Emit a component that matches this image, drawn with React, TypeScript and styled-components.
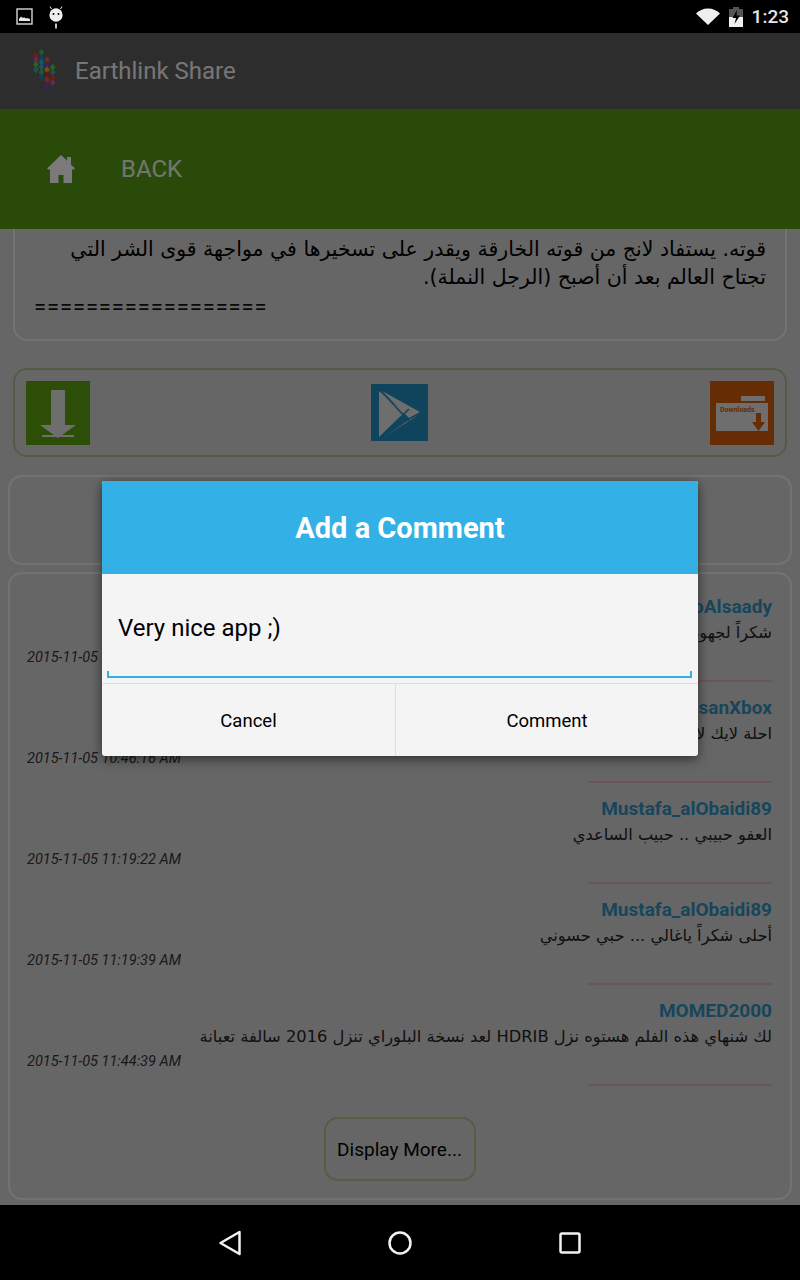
import React from "react";
import styled, { createGlobalStyle } from "styled-components";

const Global = createGlobalStyle`
  html, body { margin: 0; padding: 0; height: 100%; background: #000; }
  #root { height: 100%; }
  * { box-sizing: border-box; }
`;

const FONT = `Roboto, "DejaVu Sans", sans-serif`;

const Page = styled.div`
  width: 800px;
  height: 1280px;
  display: flex;
  flex-direction: column;
  overflow: hidden;
  font-family: ${FONT};
`;

const StatusBar = styled.div`
  height: 33px;
  flex: none;
  background: #000;
  display: flex;
  align-items: center;
  padding: 0 11px 0 16px;
  gap: 9px;
`;

const StatusSpacer = styled.div`
  flex: 1;
`;

const Clock = styled.span`
  font-size: 19px;
  font-weight: 500;
  color: #e6e6e6;
`;

const Main = styled.div`
  flex: 1;
  min-height: 0;
  position: relative;
  display: flex;
  flex-direction: column;
  background: #cdcdcd;
`;

const AppBar = styled.div`
  height: 76px;
  flex: none;
  background: #5a5a5a;
  display: flex;
  align-items: center;
  padding-left: 27px;
  gap: 14px;
`;

const AppTitle = styled.span`
  font-size: 24px;
  color: #ededed;
`;

const GreenBar = styled.div`
  height: 120px;
  flex: none;
  background: #549414;
  display: flex;
  align-items: center;
  padding-left: 46px;
  gap: 45px;
  position: relative;
  z-index: 1;
`;

const BackLabel = styled.span`
  font-size: 24px;
  color: #fff;
  opacity: 0.85;
`;

const Content = styled.div`
  flex: 1;
  min-height: 0;
  overflow: hidden;
  display: flex;
  flex-direction: column;
  justify-content: flex-end;
  padding-bottom: 5px;
`;

const Card = styled.section<{ $inset: number; $top: number; $border?: string }>`
  flex: none;
  margin: ${(p) => p.$top}px ${(p) => p.$inset}px 0;
  border: 2px solid ${(p) => p.$border ?? "#e6e6e6"};
  border-radius: 14px;
`;

const StoryCard = styled(Card)`
  padding: 0 19px 20px 19px;
`;

const StoryText = styled.p`
  margin: 0;
  direction: rtl;
  font-family: "DejaVu Sans", sans-serif;
  font-size: 20.5px;
  line-height: 28px;
  color: #000;
`;

const Rule = styled.div`
  font-family: Roboto, sans-serif;
  font-size: 22px;
  line-height: 24px;
  margin-top: 4px;
  color: #111;
  letter-spacing: 0.9px;
`;

const ActionsCard = styled(Card)`
  height: 89px;
  display: flex;
  align-items: center;
  justify-content: space-between;
  padding: 0 11px;
`;

const PlayIcon = styled.svg`
  margin-right: 2px;
`;

const OrangeFolderLabel = styled.text`
  font-family: Roboto, sans-serif;
  font-size: 7px;
  font-weight: 700;
  fill: #cc5a08;
`;

const EmptyCard = styled(Card)`
  height: 90px;
`;

const CommentsCard = styled(Card)`
  height: 628px;
  padding: 21px 18px 0 17px;
  display: flex;
  flex-direction: column;
  align-items: stretch;
`;

const Comment = styled.article`
  height: 101px;
  flex: none;
  display: flex;
  flex-direction: column;
`;

const Name = styled.div`
  text-align: right;
  font-size: 19px;
  line-height: 24px;
  font-weight: 700;
  color: #2f8cb8;
`;

const Body = styled.div`
  direction: rtl;
  font-family: "DejaVu Sans", sans-serif;
  font-size: 16.3px;
  line-height: 26px;
  margin-top: 1px;
  color: #222;
  white-space: nowrap;
`;

const Stamp = styled.div`
  font-size: 14.5px;
  line-height: 20px;
  margin-top: 2px;
  font-style: italic;
  color: #333;
`;

const Divider = styled.div`
  width: 184px;
  height: 2px;
  margin: 12px 0 0 auto;
  background: #dca9b0;
`;

const MoreRow = styled.div`
  display: flex;
  justify-content: center;
  margin-top: 17px;
`;

const MoreButton = styled.button`
  width: 152px;
  height: 64px;
  border: 2px solid #b4b884;
  border-radius: 14px;
  background: transparent;
  font-family: ${FONT};
  font-size: 19px;
  color: #000;
  padding: 0;
`;

const Scrim = styled.div`
  position: absolute;
  inset: 0;
  z-index: 2;
  background: rgba(0, 0, 0, 0.5);
  display: flex;
  align-items: center;
  justify-content: center;
  padding-bottom: 2px;
`;

const Dialog = styled.div`
  width: 596px;
  height: 275px;
  border-radius: 3px;
  overflow: hidden;
  background: #f4f4f4;
  box-shadow: 0 3px 12px rgba(0, 0, 0, 0.55);
  display: flex;
  flex-direction: column;
`;

const DialogTitle = styled.h2`
  margin: 0;
  height: 93px;
  flex: none;
  padding-top: 2px;
  background: #33b1e6;
  color: #fff;
  font-size: 29px;
  font-weight: 700;
  display: flex;
  align-items: center;
  justify-content: center;
`;

const Field = styled.div`
  height: 109px;
  flex: none;
  padding: 35px 6px 0 5px;
`;

const FieldValue = styled.div`
  height: 69px;
  padding: 3px 0 0 11px;
  font-size: 24px;
  line-height: 32px;
  color: #000;
  border-bottom: 2px solid #33b1e6;
  position: relative;
  &::before,
  &::after {
    content: "";
    position: absolute;
    bottom: 0;
    width: 2px;
    height: 5px;
    background: #33b1e6;
  }
  &::before { left: 0; }
  &::after { right: 0; }
`;

const DialogActions = styled.div`
  flex: 1;
  display: grid;
  grid-template-columns: 293px 1fr;
  border-top: 1px solid #dedede;
`;

const DialogButton = styled.button`
  border: 0;
  background: transparent;
  font-family: ${FONT};
  font-size: 18.5px;
  color: #000;
  padding: 2px 0 0;
  & + & { border-left: 1px solid #dedede; }
`;

const NavBar = styled.div`
  height: 75px;
  flex: none;
  background: #000;
  display: grid;
  grid-template-columns: repeat(3, 170px);
  justify-content: center;
  align-items: center;
  justify-items: center;
`;

const logoColors = ["#2fa8a0", "#d0602a", "#3aa0d8", "#c8402a", "#7a40c8", "#40b060", "#d84a90", "#e8a020", "#3070d0", "#60c040", "#c83030", "#30b0b0"];

const Logo = () => {
  const cells: React.ReactNode[] = [];
  for (let r = 0; r < 7; r++) {
    for (let c = 0; c < 4; c++) {
      if ((r === 0 && c !== 1) || (r === 6 && c !== 2) || (r === 1 && c === 3) || (r === 5 && c === 0)) continue;
      const x = 6 + c * 5.6;
      const y = 1.5 + r * 5 + c * 2.5;
      cells.push(
        <path
          key={`${r}-${c}`}
          d={`M${x} ${y}l2.9-3.2 2.9 3.200-2.900 4.200z`}
          fill={logoColors[(r * 3 + c * 5) % logoColors.length]}
        />
      );
    }
  }
  return (
    <svg width="34" height="46" viewBox="0 0 34 46" aria-hidden>
      {cells}
    </svg>
  );
};

const comments = [
  { name: "AboAlsaady", text: "شكراً لجهودكم الرائعة والمميزة دائماً يا طيبين", time: "2015-11-05 10:40:02 AM" },
  { name: "HasanXbox", text: "احلة لايك لاحلى تطبيق من الايرثلنك", time: "2015-11-05 10:46:16 AM" },
  { name: "Mustafa_alObaidi89", text: "العفو حبيبي .. حبيب الساعدي", time: "2015-11-05 11:19:22 AM" },
  { name: "Mustafa_alObaidi89", text: "أحلى شكراً ياغالي ... حبي حسوني", time: "2015-11-05 11:19:39 AM" },
  { name: "MOMED2000", text: "لك شنهاي هذه الفلم هستوه نزل HDRIB لعد نسخة البلوراي تنزل 2016 سالفة تعبانة", time: "2015-11-05 11:44:39 AM" },
];

export default function App() {
  return (
    <Page>
      <Global />
      <StatusBar>
        <svg width="17" height="17" viewBox="0 0 17 17" aria-hidden>
          <rect x="1" y="1" width="15" height="15" fill="none" stroke="#d8d8d8" strokeWidth="1.4" />
          <path d="M3 13v-2l2-2.5 2 1.5 1-.8 2 1.2 1-.4 3 1V13z" fill="#e8e8e8" />
        </svg>
        <svg width="30" height="26" viewBox="0 0 30 26" aria-hidden>
          <ellipse cx="14" cy="11" rx="6.6" ry="6.8" fill="#efefef" />
          <path d="M9.5 5 8 2.5M18.5 5 20 2.5" stroke="#efefef" strokeWidth="1" />
          <circle cx="11.5" cy="10" r="1" fill="#000" />
          <circle cx="16.5" cy="10" r="1" fill="#000" />
          <rect x="13.2" y="19.5" width="1.6" height="5" fill="#efefef" />
        </svg>
        <StatusSpacer />
        <svg width="24" height="17" viewBox="0 0 24 17" aria-hidden>
          <path d="M0 5.5C3 2.5 7 .5 12 .5s9 2 12 5L12 17z" fill="#efefef" />
        </svg>
        <svg width="14" height="20" viewBox="0 0 14 20" aria-hidden>
          <path d="M4 0h6v2h4v18H0V2h4z" fill="#efefef" />
          <path d="M0 2h4V0h6v2h4v8H0z" fill="#555" />
          <path d="M8 3 3.5 11H7l-1.500 6L11 8.500H7.500z" fill="#000" />
        </svg>
        <Clock>1:23</Clock>
      </StatusBar>

      <Main>
        <AppBar>
          <Logo />
          <AppTitle>Earthlink Share</AppTitle>
        </AppBar>
        <GreenBar>
          <svg width="30" height="30" viewBox="0 0 30 30" aria-hidden>
            <path d="M15 1 1 14.500l1.200 1H4V29h8.500v-8h5v8H26V15.500h2l1-1-4-4V3h-4v3.500z" fill="#f4f4f4" />
          </svg>
          <BackLabel>BACK</BackLabel>
        </GreenBar>
        <Content>
          <StoryCard $inset={13} $top={0}>
            <StoryText>
              (سكوت لانج) في البداية يتم تدريبه على استخدام قوته الخارقة على يد هانك بيم لمضاعفة
              <br />
              قوته. يستفاد لانج من قوته الخارقة ويقدر على تسخيرها في مواجهة قوى الشر التي
              <br />
              تجتاح العالم بعد أن أصبح (الرجل النملة).
            </StoryText>
            <Rule>==================</Rule>
          </StoryCard>

          <ActionsCard $inset={13} $top={27} $border="#a9b78f">
            <svg width="64" height="64" viewBox="0 0 64 64" aria-hidden>
              <rect width="64" height="64" fill="#5a9c0c" />
              <path d="M25 9h14v35h11L32 57 14 44h11z" fill="#dcdcdc" />
              <rect x="16" y="54" width="32" height="2" fill="#dcdcdc" />
            </svg>
            <PlayIcon width="57" height="57" viewBox="0 0 57 57" aria-hidden>
              <rect width="57" height="57" fill="#1e88b8" />
              <path d="M8 7 34 28.500 8 54z" fill="#dcdcdc" />
              <path d="M11 7 49 28 38 34z" fill="#dcdcdc" />
              <path d="M11 54 49 30 38 36z" fill="#dcdcdc" />
              <path d="M9 6 38 37M8 54 38 25" stroke="#1e88b8" strokeWidth="1.600" fill="none" />
            </PlayIcon>
            <svg width="64" height="64" viewBox="0 0 64 64" aria-hidden>
              <rect width="64" height="64" fill="#cc5a08" />
              <rect x="31" y="15" width="24" height="5" fill="#dcdcdc" />
              <rect x="6" y="22" width="52" height="28" fill="#dcdcdc" />
              <OrangeFolderLabel x="10" y="31">Downloads</OrangeFolderLabel>
              <path d="M46 32h5v9h4l-6.500 9L42 41h4z" fill="#cc5a08" />
            </svg>
          </ActionsCard>

          <EmptyCard $inset={8} $top={18} />

          <CommentsCard $inset={8} $top={7}>
            {comments.map((c, i) => (
              <Comment key={i}>
                <Name>{c.name}</Name>
                <Body>{c.text}</Body>
                <Stamp>{c.time}</Stamp>
                <Divider />
              </Comment>
            ))}
            <MoreRow>
              <MoreButton>Display More...</MoreButton>
            </MoreRow>
          </CommentsCard>
        </Content>

        <Scrim>
          <Dialog>
            <DialogTitle>Add a Comment</DialogTitle>
            <Field>
              <FieldValue>Very nice app ;)</FieldValue>
            </Field>
            <DialogActions>
              <DialogButton>Cancel</DialogButton>
              <DialogButton>Comment</DialogButton>
            </DialogActions>
          </Dialog>
        </Scrim>
      </Main>

      <NavBar>
        <svg width="26" height="28" viewBox="0 0 26 28" aria-hidden>
          <path d="M22.500 3 3.500 14l19 11z" fill="none" stroke="#f2f2f2" strokeWidth="2.500" strokeLinejoin="round" />
        </svg>
        <svg width="26" height="26" viewBox="0 0 26 26" aria-hidden>
          <circle cx="13" cy="13" r="10.500" fill="none" stroke="#f2f2f2" strokeWidth="2.500" />
        </svg>
        <svg width="24" height="24" viewBox="0 0 24 24" aria-hidden>
          <rect x="2.500" y="2.500" width="19" height="19" rx="1.500" fill="none" stroke="#f2f2f2" strokeWidth="2.500" />
        </svg>
      </NavBar>
    </Page>
  );
}
